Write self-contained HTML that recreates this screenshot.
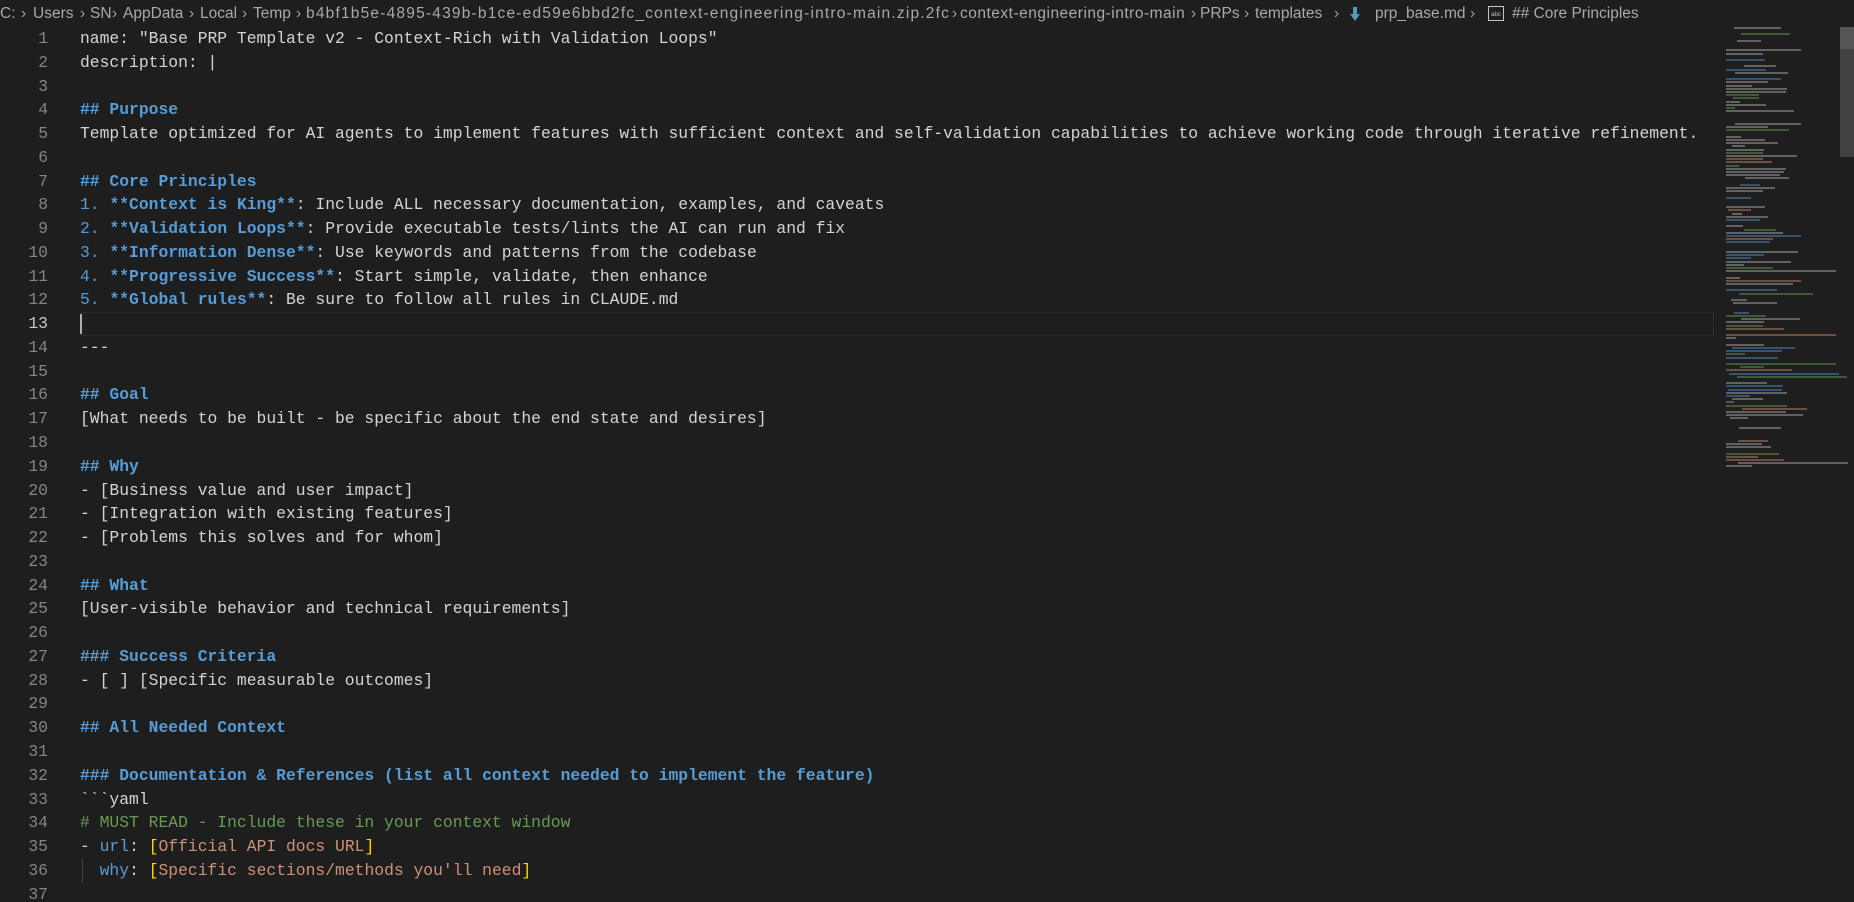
<!DOCTYPE html>
<html><head><meta charset="utf-8"><style>
html,body{margin:0;padding:0;background:#1e1e1e;width:1854px;height:902px;overflow:hidden;position:relative}
.bc{position:absolute;top:3px;height:22px;line-height:22px;font-family:"Liberation Sans",sans-serif;font-size:15.5px;color:#a9a9a9;white-space:nowrap}
.chev{color:#a0a0a0}
.ed{position:absolute;left:0;top:27px;width:1714px;font-family:"Liberation Mono",monospace;font-size:16.35px;line-height:23.78px;color:#d4d4d4}
.l{position:relative;height:23.78px;white-space:pre}
.n{position:absolute;left:0;width:48px;text-align:right;color:#858585}
.t{position:absolute;left:80px}
.h{color:#569cd6;font-weight:bold}
.b{color:#569cd6}
.c{color:#6a9955}
.s{color:#ce9178}
.g{color:#ffd700}
.cur{position:absolute;left:80px;right:0;top:0;height:21.78px;border:1px solid #2a2a2a}
.mm{position:absolute;left:1726px;top:0;width:112px;height:902px}
.mm div{position:absolute;height:2px;opacity:.55}
</style></head><body>
<div class="bc" style="left:0">C:</div>
<div class="bc chev" style="left:21px">›</div>
<div class="bc" style="left:33px">Users</div>
<div class="bc chev" style="left:80px">›</div>
<div class="bc" style="left:90px">SN</div>
<div class="bc chev" style="left:112px">›</div>
<div class="bc" style="left:123px">AppData</div>
<div class="bc chev" style="left:189px">›</div>
<div class="bc" style="left:200px">Local</div>
<div class="bc chev" style="left:242px">›</div>
<div class="bc" style="left:253px">Temp</div>
<div class="bc chev" style="left:296px">›</div>
<div class="bc" style="left:306px;letter-spacing:1.2px">b4bf1b5e-4895-439b-b1ce-ed59e6bbd2fc_context-engineering-intro-main.zip.2fc</div>
<div class="bc chev" style="left:952px">›</div>
<div class="bc" style="left:960px;letter-spacing:0.5px">context-engineering-intro-main</div>
<div class="bc chev" style="left:1191px">›</div>
<div class="bc" style="left:1200px">PRPs</div>
<div class="bc chev" style="left:1244px">›</div>
<div class="bc" style="left:1255px">templates</div>
<div class="bc chev" style="left:1334px">›</div>
<svg style="position:absolute;left:1349px;top:6px" width="12" height="16" viewBox="0 0 12 16"><path d="M4 1h4v7h3l-5 7-5-7h3z" fill="#519aba"/></svg>
<div class="bc" style="left:1375px">prp_base.md</div>
<div class="bc chev" style="left:1470px">›</div>
<svg style="position:absolute;left:1488px;top:6px" width="16" height="15" viewBox="0 0 16 15"><rect x="0.5" y="0.5" width="15" height="14" fill="none" stroke="#c5c5c5"/><text x="8" y="10" font-size="6" fill="#c5c5c5" text-anchor="middle" font-family="Liberation Sans">abc</text></svg>
<div class="bc" style="left:1512px">## Core Principles</div>

<div class="ed">
<div class="l"><span class="n">1</span><span class="t">name: "Base PRP Template v2 - Context-Rich with Validation Loops"</span></div>
<div class="l"><span class="n">2</span><span class="t">description: |</span></div>
<div class="l"><span class="n">3</span></div>
<div class="l"><span class="n">4</span><span class="t h">## Purpose</span></div>
<div class="l"><span class="n">5</span><span class="t">Template optimized for AI agents to implement features with sufficient context and self-validation capabilities to achieve working code through iterative refinement.</span></div>
<div class="l"><span class="n">6</span></div>
<div class="l"><span class="n">7</span><span class="t h">## Core Principles</span></div>
<div class="l"><span class="n">8</span><span class="t"><span class="b">1.</span> <span class="h">**Context is King**</span>: Include ALL necessary documentation, examples, and caveats</span></div>
<div class="l"><span class="n">9</span><span class="t"><span class="b">2.</span> <span class="h">**Validation Loops**</span>: Provide executable tests/lints the AI can run and fix</span></div>
<div class="l"><span class="n">10</span><span class="t"><span class="b">3.</span> <span class="h">**Information Dense**</span>: Use keywords and patterns from the codebase</span></div>
<div class="l"><span class="n">11</span><span class="t"><span class="b">4.</span> <span class="h">**Progressive Success**</span>: Start simple, validate, then enhance</span></div>
<div class="l"><span class="n">12</span><span class="t"><span class="b">5.</span> <span class="h">**Global rules**</span>: Be sure to follow all rules in CLAUDE.md</span></div>
<div class="l"><div class="cur"></div><span class="n" style="color:#c6c6c6">13</span><span style="position:absolute;left:80px;top:2px;width:2px;height:20px;background:#aeafad"></span></div>
<div class="l"><span class="n">14</span><span class="t">---</span></div>
<div class="l"><span class="n">15</span></div>
<div class="l"><span class="n">16</span><span class="t h">## Goal</span></div>
<div class="l"><span class="n">17</span><span class="t">[What needs to be built - be specific about the end state and desires]</span></div>
<div class="l"><span class="n">18</span></div>
<div class="l"><span class="n">19</span><span class="t h">## Why</span></div>
<div class="l"><span class="n">20</span><span class="t">- [Business value and user impact]</span></div>
<div class="l"><span class="n">21</span><span class="t">- [Integration with existing features]</span></div>
<div class="l"><span class="n">22</span><span class="t">- [Problems this solves and for whom]</span></div>
<div class="l"><span class="n">23</span></div>
<div class="l"><span class="n">24</span><span class="t h">## What</span></div>
<div class="l"><span class="n">25</span><span class="t">[User-visible behavior and technical requirements]</span></div>
<div class="l"><span class="n">26</span></div>
<div class="l"><span class="n">27</span><span class="t h">### Success Criteria</span></div>
<div class="l"><span class="n">28</span><span class="t">- [ ] [Specific measurable outcomes]</span></div>
<div class="l"><span class="n">29</span></div>
<div class="l"><span class="n">30</span><span class="t h">## All Needed Context</span></div>
<div class="l"><span class="n">31</span></div>
<div class="l"><span class="n">32</span><span class="t h">### Documentation &amp; References (list all context needed to implement the feature)</span></div>
<div class="l"><span class="n">33</span><span class="t">&#96;&#96;&#96;yaml</span></div>
<div class="l"><span class="n">34</span><span class="t c"># MUST READ - Include these in your context window</span></div>
<div class="l"><span class="n">35</span><span class="t">- <span class="b">url</span>: <span class="g">[</span><span class="s">Official API docs URL</span><span class="g">]</span></span></div>
<div class="l"><span style="position:absolute;left:82px;top:0;width:1px;height:23.78px;background:#404040"></span><span class="n">36</span><span class="t">  <span class="b">why</span>: <span class="g">[</span><span class="s">Specific sections/methods you'll need</span><span class="g">]</span></span></div>
<div class="l"><span class="n">37</span></div>
</div>

<div class="mm" id="mm"></div>
<div style="position:absolute;left:1840px;top:27px;width:14px;height:130px;background:#424242"></div>
<div style="position:absolute;left:1840px;top:27px;width:14px;height:22px;background:#555"></div>
<script>
(function(){
var mm=document.getElementById('mm');var cols=['#9a9a9a','#9a9a9a','#4d7fb8','#9a9a9a','#5f8a4e','#b07a5c','#9a9a9a'];
var seed=7;function r(){seed=(seed*9301+49297)%233280;return seed/233280;}
for(var y=27;y<468;y+=3.2){
 if(r()<0.18)continue;
 var w=8+Math.floor(r()*70);if(r()<0.05)w=110;
 var x=Math.floor(r()<0.3?r()*20:0);
 var d=document.createElement('div');d.style.top=y+'px';d.style.left=x+'px';d.style.width=w+'px';d.style.background=cols[Math.floor(r()*cols.length)];mm.appendChild(d);
}})();
</script>
</body></html>
